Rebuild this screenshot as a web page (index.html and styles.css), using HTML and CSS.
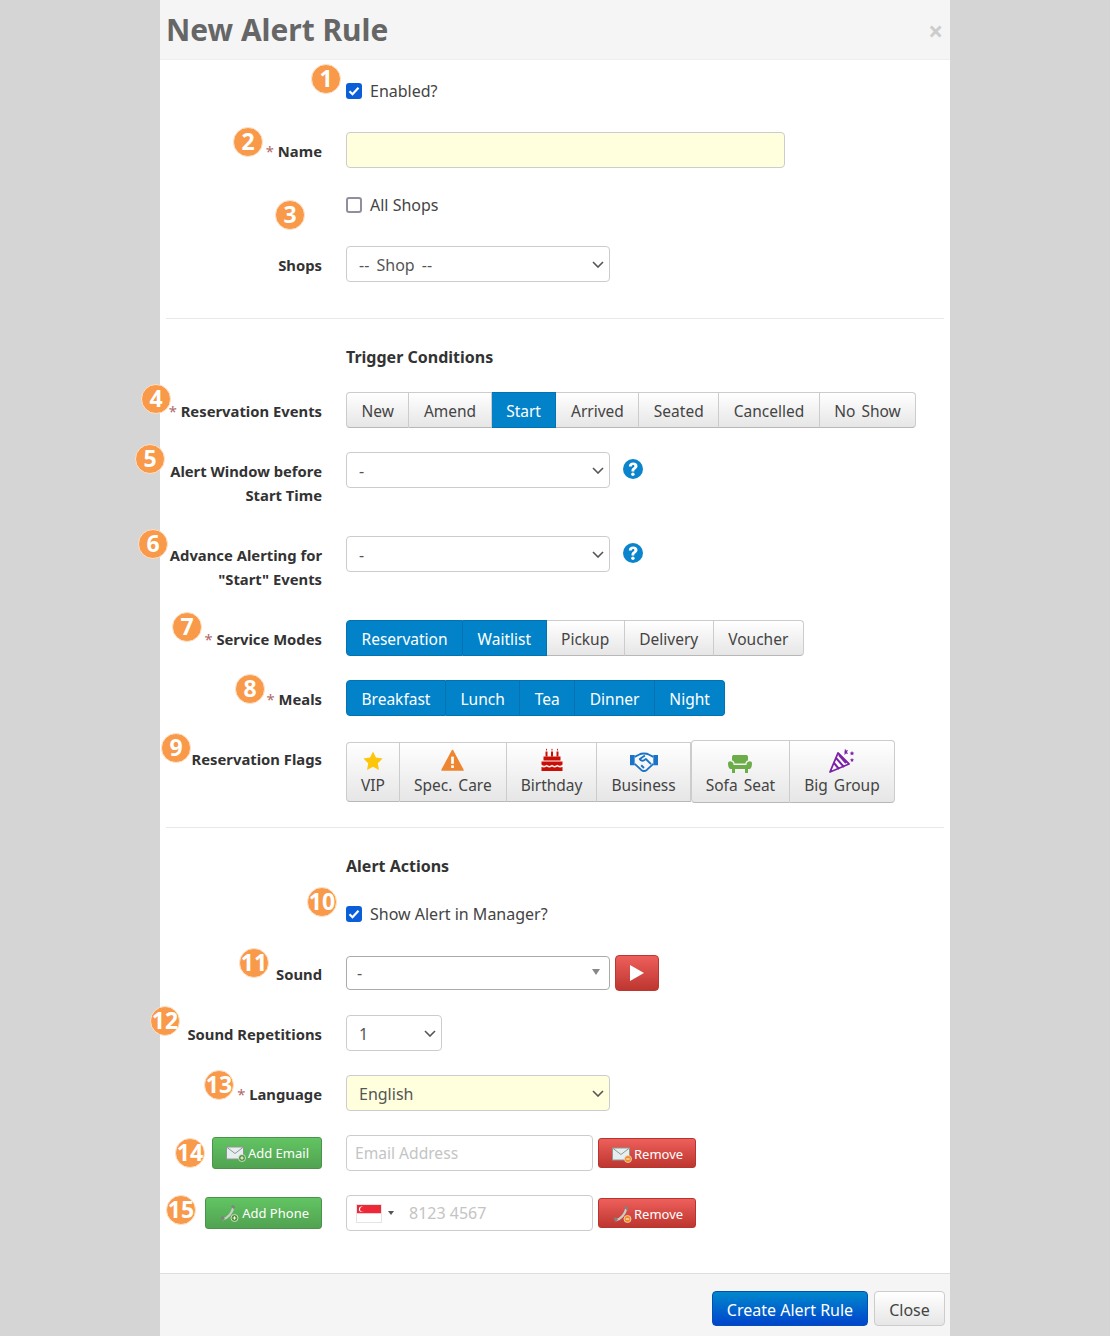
FILE: index.html
```html
<!DOCTYPE html>
<html lang="en">
<head>
    <meta charset="UTF-8">
    <meta name="viewport" content="width=device-width, initial-scale=1.0">
    <title>New Alert Rule</title>
    <link rel="stylesheet" href="styles.css">
</head>
<body>
    <div class="modal">
        <div class="modal-header">
            <h1>New Alert Rule</h1>
            <span class="close-x">&times;</span>
        </div>
        <form class="modal-body">
            <div class="form-row check-row">
                <div></div>
                <label class="check"><input type="checkbox" checked> Enabled?</label>
            </div>
            <div class="form-row">
                <label class="field-label"><span class="req">*</span> Name</label>
                <input type="text" class="text-input name-input yellow">
            </div>
            <div class="form-row check-row short">
                <div></div>
                <label class="check"><input type="checkbox"> All Shops</label>
            </div>
            <div class="form-row section-end">
                <label class="field-label">Shops</label>
                <select class="select-input"><option>-- Shop --</option></select>
            </div>

            <hr>
            <h2 class="section-title">Trigger Conditions</h2>

            <div class="form-row">
                <label class="field-label"><span class="req">*</span> Reservation Events</label>
                <div class="btn-group">
                    <button type="button" class="btn">New</button>
                    <button type="button" class="btn">Amend</button>
                    <button type="button" class="btn active">Start</button>
                    <button type="button" class="btn">Arrived</button>
                    <button type="button" class="btn">Seated</button>
                    <button type="button" class="btn">Cancelled</button>
                    <button type="button" class="btn">No Show</button>
                </div>
            </div>
            <div class="form-row tall">
                <label class="field-label">Alert Window before Start Time</label>
                <div class="with-help">
                    <select class="select-input"><option>-</option></select>
                    <svg class="help" viewBox="0 0 20 20"><circle cx="10" cy="10" r="10" fill="#0a84cc"/><path d="M5.800 7.600C5.900 5 7.600 3.500 10.200 3.500c2.600 0 4.300 1.400 4.300 3.500 0 1.500-.8 2.400-2 3.200-1 .7-1.200 1-1.200 1.800v.4H8.500v-.7c0-1.400.5-2.200 1.600-3 .9-.6 1.300-1 1.300-1.600 0-.7-.5-1.100-1.200-1.100-.8 0-1.300.5-1.400 1.500z" fill="#fff"/><circle cx="9.900" cy="15.200" r="1.700" fill="#fff"/></svg>
                </div>
            </div>
            <div class="form-row tall">
                <label class="field-label">Advance Alerting for "Start" Events</label>
                <div class="with-help">
                    <select class="select-input"><option>-</option></select>
                    <svg class="help" viewBox="0 0 20 20"><circle cx="10" cy="10" r="10" fill="#0a84cc"/><path d="M5.800 7.600C5.900 5 7.600 3.500 10.200 3.500c2.600 0 4.300 1.400 4.300 3.500 0 1.500-.8 2.400-2 3.200-1 .7-1.200 1-1.200 1.800v.4H8.500v-.7c0-1.400.5-2.200 1.600-3 .9-.6 1.300-1 1.300-1.600 0-.7-.5-1.100-1.200-1.100-.8 0-1.300.5-1.400 1.500z" fill="#fff"/><circle cx="9.900" cy="15.200" r="1.700" fill="#fff"/></svg>
                </div>
            </div>
            <div class="form-row">
                <label class="field-label"><span class="req">*</span> Service Modes</label>
                <div class="btn-group">
                    <button type="button" class="btn active">Reservation</button>
                    <button type="button" class="btn active">Waitlist</button>
                    <button type="button" class="btn">Pickup</button>
                    <button type="button" class="btn">Delivery</button>
                    <button type="button" class="btn">Voucher</button>
                </div>
            </div>
            <div class="form-row">
                <label class="field-label"><span class="req">*</span> Meals</label>
                <div class="btn-group">
                    <button type="button" class="btn active">Breakfast</button>
                    <button type="button" class="btn active">Lunch</button>
                    <button type="button" class="btn active">Tea</button>
                    <button type="button" class="btn active">Dinner</button>
                    <button type="button" class="btn active">Night</button>
                </div>
            </div>
            <div class="form-row">
                <label class="field-label">Reservation Flags</label>
                <div class="flag-groups">
                    <div class="btn-group flags">
                        <button type="button" class="btn flag">
                            <svg viewBox="0 0 24 24" width="22" height="22"><path d="M12 1.500l3.200 6.800 7.300 1-5.300 5.200 1.300 7.400L12 18.300l-6.500 3.600 1.300-7.400L1.500 9.300l7.300-1z" fill="#fdc60a"/></svg>
                            VIP
                        </button>
                        <button type="button" class="btn flag">
                            <svg viewBox="0 0 24 24" width="23" height="23"><path d="M12 1.500L23 22H1z" fill="#ee8530" stroke="#ee8530" stroke-width="1.500" stroke-linejoin="round"/><rect x="10.600" y="8" width="2.800" height="7.500" fill="#fff"/><rect x="10.600" y="17" width="2.800" height="2.800" fill="#fff"/></svg>
                            Spec. Care
                        </button>
                        <button type="button" class="btn flag">
                            <svg viewBox="0 0 24 24" width="24" height="24"><path d="M1.500 13.500h21v3c-1.700 1.700-3.500 1.700-5.200.3-1.700 1.500-3.600 1.500-5.300 0-1.700 1.500-3.600 1.500-5.300 0-1.700 1.400-3.500 1.400-5.200-.3z" fill="#c90e05"/><path d="M1.500 19c1.900.8 3.600.6 5.200-.5 1.700 1.200 3.600 1.200 5.300 0 1.700 1.200 3.600 1.200 5.300 0 1.600 1.100 3.300 1.300 5.200.5v4h-21z" fill="#c90e05"/><path d="M3.500 8.500h17v4h-17z" fill="#c90e05"/><path d="M5.500 3.500h2v5h-2zM11 3.500h2v5h-2zM16.500 3.500h2v5h-2z" fill="#c90e05"/><path d="M6.500.5c.8 1 .8 1.800 0 2.300-.8-.5-.8-1.300 0-2.300zM12 .5c.8 1 .8 1.800 0 2.300-.8-.5-.8-1.300 0-2.300zM17.500.5c.8 1 .8 1.800 0 2.300-.8-.5-.8-1.300 0-2.300z" fill="#c90e05"/></svg>
                            Birthday
                        </button>
                        <button type="button" class="btn flag">
                            <svg viewBox="0 0 30 22" width="28" height="21"><path d="M0 4h5v11H0zM25 4h5v11h-5z" fill="#1a73c8"/><path d="M5 6l5-2.500c2-1.500 8-1.500 10 0L25 6M5 13.500l7 6.500c2 1.500 4 1.500 6 0l7-6.500" fill="none" stroke="#1a73c8" stroke-width="2" stroke-linejoin="round"/><path d="M16 4.500l-5.500 3.800c1.200 2.200 3.200 2.300 5 1l1.500-1 5.500 5.500M12 15l3 3" fill="none" stroke="#1a73c8" stroke-width="2" stroke-linejoin="round"/></svg>
                            Business
                        </button>
                    </div>
                    <div class="btn-group flags raised">
                        <button type="button" class="btn flag">
                            <svg viewBox="0 0 26 20" width="26" height="20"><path d="M5 3C5 1.500 6 1 7 1h12c1 0 2 .5 2 2v3.500c-1.500.3-2.500 1.300-2.500 3h-11C7.500 7.800 6.500 6.800 5 6.500z" fill="#6cad4a"/><path d="M1 9.500C1 8 2 7.300 3 7.300s3.500.7 3.500 3v.7h13v-.7c0-2.300 2.500-3 3.500-3s2 .7 2 2.200c0 2.500-.5 4.500-2 5.500H3c-1.500-1-2-3-2-5.500z" fill="#6cad4a"/><path d="M5 15h3v4H5zM18 15h3v4h-3z" fill="#6cad4a"/></svg>
                            Sofa Seat
                        </button>
                        <button type="button" class="btn flag popper">
                            <svg viewBox="0 0 26 26" width="26" height="26"><path d="M1 25L9 6l11 11z" fill="#fff" stroke="#7b22a8" stroke-width="1.800" stroke-linejoin="round"/><path d="M7 11l8 9M5 16l5 6M10 8l7 8" stroke="#7b22a8" stroke-width="2"/><path d="M16 1.500l1 2 2-.5-1 2 1 2-2-.5-1.500 1.500V5zM23 4l.7 1.500 1.600.2-1.200 1 .3 1.600-1.400-.8-1.400.8.3-1.600-1.200-1 1.600-.2zM23 11l.6 1.200 1.400.2-1 1 .2 1.400-1.200-.6-1.200.6.2-1.400-1-1 1.400-.2z" fill="#7b22a8"/></svg>
                            Big Group
                        </button>
                    </div>
                </div>
            </div>

            <hr>
            <h2 class="section-title actions">Alert Actions</h2>

            <div class="form-row check-row">
                <div></div>
                <label class="check"><input type="checkbox" checked> Show Alert in Manager?</label>
            </div>
            <div class="form-row">
                <label class="field-label">Sound</label>
                <div class="sound-wrap">
                    <div class="sound-select"><span>-</span><i class="caret"></i></div>
                    <button type="button" class="btn-play">
                        <svg viewBox="0 0 14 16" width="14" height="16"><path d="M0 0l14 8-14 8z" fill="#fff"/></svg>
                    </button>
                </div>
            </div>
            <div class="form-row">
                <label class="field-label">Sound Repetitions</label>
                <select class="select-input small"><option>1</option></select>
            </div>
            <div class="form-row">
                <label class="field-label"><span class="req">*</span> Language</label>
                <select class="select-input yellow"><option>English</option></select>
            </div>
            <div class="form-row">
                <div class="label-btn">
                    <button type="button" class="btn-small green">
                        <svg viewBox="0 0 20 18" width="20" height="18"><rect x=".5" y="3" width="17" height="12" fill="#e8eef0" stroke="#8a9a92"/><path d="M.5 3L9 9.500 17.500 3" fill="none" stroke="#8a9a92"/><circle cx="16" cy="14" r="3.500" fill="#4f8f34" stroke="#e8f0e0" stroke-width=".8"/><path d="M14.300 14h3.400M16 12.300v3.400" stroke="#fff"/></svg>
                        Add Email
                    </button>
                </div>
                <div class="contact-row">
                    <input type="text" class="text-input contact" placeholder="Email Address">
                    <button type="button" class="btn-small red">
                        <svg viewBox="0 0 20 18" width="20" height="18"><rect x=".5" y="3" width="17" height="12" fill="#e8eef0" stroke="#8a9a92"/><path d="M.5 3L9 9.500 17.500 3" fill="none" stroke="#8a9a92"/><circle cx="16" cy="14" r="3.500" fill="#f08a24" stroke="#f5dcc0" stroke-width=".8"/><path d="M14.300 14h3.400" stroke="#fff"/></svg>
                        Remove
                    </button>
                </div>
            </div>
            <div class="form-row">
                <div class="label-btn">
                    <button type="button" class="btn-small green">
                        <svg viewBox="0 0 21 18" width="21" height="18"><path d="M3.500 15.500C9 14 13 9 14.500 3" fill="none" stroke="#c8cec8" stroke-width="2.200"/><path d="M1.500 13.500l2.500-1.500 2 3-2.500 1.500zM12 2.500l2-1.500 2.500 2.500-2 1.500z" fill="#7c847c"/><circle cx="15.500" cy="14" r="3.500" fill="#4f8f34" stroke="#e8f0e0" stroke-width=".8"/><path d="M13.800 14h3.400M15.500 12.300v3.400" stroke="#fff"/></svg>
                        Add Phone
                    </button>
                </div>
                <div class="contact-row">
                    <div class="phone-input">
                        <span class="flag-sg">
                            <svg viewBox="0 0 24 17" width="24" height="17"><rect width="24" height="8.500" fill="#ed2939"/><rect y="8.500" width="24" height="8.500" fill="#fff"/><circle cx="4.500" cy="4.200" r="2.600" fill="#fff"/><circle cx="5.600" cy="4.200" r="2.500" fill="#ed2939"/></svg>
                        </span>
                        <i class="flag-caret"></i>
                        <input type="text" class="phone-number" placeholder="8123 4567">
                    </div>
                    <button type="button" class="btn-small red">
                        <svg viewBox="0 0 20 18" width="20" height="18"><path d="M3.500 15.500C9 14 13 9 14.500 3" fill="none" stroke="#c8cec8" stroke-width="2.200"/><path d="M1.500 13.500l2.500-1.500 2 3-2.500 1.500zM12 2.500l2-1.500 2.500 2.500-2 1.500z" fill="#7c847c"/><circle cx="15.500" cy="14" r="3.500" fill="#f08a24" stroke="#f5dcc0" stroke-width=".8"/><path d="M13.800 14h3.400" stroke="#fff"/></svg>
                        Remove
                    </button>
                </div>
            </div>
        </form>
        <div class="modal-footer">
            <button type="button" class="btn-create">Create Alert Rule</button>
            <button type="button" class="btn-close">Close</button>
        </div>

        <!-- numbered callouts drawn over the form -->
        <span class="badge b1">1</span>
        <span class="badge b2">2</span>
        <span class="badge b3">3</span>
        <span class="badge b4">4</span>
        <span class="badge b5">5</span>
        <span class="badge b6">6</span>
        <span class="badge b7">7</span>
        <span class="badge b8">8</span>
        <span class="badge b9">9</span>
        <span class="badge b10">10</span>
        <span class="badge b11">11</span>
        <span class="badge b12">12</span>
        <span class="badge b13">13</span>
        <span class="badge b14">14</span>
        <span class="badge b15">15</span>
    </div>
</body>
</html>
```

FILE: styles.css
```css
* {
    box-sizing: border-box;
}
html, body {
    margin: 0;
    height: 100%;
}
body {
    background-color: #d5d5d5;
    font-family: "Noto Sans", "Open Sans", sans-serif;
    font-size: 16px;
    color: #444;
    overflow: hidden;
}
button, input, select {
    font-family: inherit;
}
.modal {
    position: relative;
    width: 790px;
    height: 1336px;
    margin-left: 160px;
    background-color: #fff;
}
.modal-header {
    display: flex;
    justify-content: space-between;
    align-items: center;
    height: 60px;
    padding: 0 7px 0 6px;
    background-color: #f5f5f5;
    border-bottom: 1px solid #eee;
}
.modal-header h1 {
    margin: 0;
    font-size: 29.900px;
    font-weight: 700;
    color: #666;
}
.close-x {
    margin-top: 2px;
    font-size: 26px;
    font-weight: 700;
    color: #ccc;
}
.modal-body {
    padding: 12px 6px 18px;
}
.form-row {
    display: grid;
    grid-template-columns: 156px 1fr;
    column-gap: 24px;
    min-height: 36px;
    margin-bottom: 24px;
}
.form-row.section-end {
    margin-bottom: 36px;
}
.form-row.tall {
    height: 60px;
}
.form-row.check-row {
    padding-top: 7px;
}
.form-row.short {
    min-height: 30px;
    height: 30px;
    padding-top: 1px;
}
.field-label {
    padding-top: 7px;
    font-size: 14.800px;
    line-height: 24px;
    font-weight: 700;
    color: #333;
    text-align: right;
}
.req {
    color: #b0686b;
    font-weight: 400;
}
.check {
    display: flex;
    align-items: center;
    gap: 8px;
    height: 24px;
    font-size: 16px;
}
.check input {
    appearance: none;
    width: 16px;
    height: 16px;
    margin: 0;
    background-color: #fff;
    border: 2px solid #8f8f9d;
    border-radius: 3px;
}
.check input:checked {
    border: 0;
    background: #0a5fd8 url("data:image/svg+xml,%3Csvg xmlns='http://www.w3.org/2000/svg' viewBox='0 0 16 16'%3E%3Cpath d='M3.500 8.200l3 3 6-6.500' fill='none' stroke='%23fff' stroke-width='2.200'/%3E%3C/svg%3E") center / 16px no-repeat;
}
.text-input, .select-input {
    height: 36px;
    padding: 0 12px;
    font-size: 16px;
    color: #555;
    background-color: #fff;
    border: 1px solid #ccc;
    border-radius: 4px;
}
.text-input::placeholder, .phone-number::placeholder {
    color: #c4c4c4;
}
.name-input {
    width: 439px;
}
.select-input {
    width: 264px;
    padding-top: 2px;
    word-spacing: 3px;
    appearance: none;
    background-image: url("data:image/svg+xml,%3Csvg xmlns='http://www.w3.org/2000/svg' viewBox='0 0 12 7'%3E%3Cpath d='M1 1l5 5 5-5' fill='none' stroke='%23555' stroke-width='1.600'/%3E%3C/svg%3E");
    background-repeat: no-repeat;
    background-position: right 5px center;
    background-size: 12px 7px;
}
.select-input.small {
    width: 96px;
}
.select-input.yellow, .yellow {
    background-color: #ffffdd;
}
hr {
    height: 1px;
    margin: 0;
    border: 0;
    background-color: #e8e8e8;
}
.section-title {
    margin: 26px 0 23px 180px;
    font-size: 16px;
    line-height: 24px;
    font-weight: 700;
    color: #333;
}
.section-title.actions {
    margin-bottom: 17px;
}
.btn-group {
    display: flex;
    align-items: flex-start;
}
.btn {
    height: 36px;
    padding: 2px 14.500px 0;
    font-size: 15.500px;
    word-spacing: 2px;
    color: #444;
    background: linear-gradient(#fff, #e6e6e6);
    border: 1px solid #ccc;
    border-left-width: 0;
    border-bottom-color: #b8b8b8;
    white-space: nowrap;
}
.btn:first-child {
    border-left-width: 1px;
    border-radius: 4px 0 0 4px;
}
.btn:last-child {
    border-radius: 0 4px 4px 0;
}
.btn.active {
    color: #fff;
    background: #0283c9;
    border-color: #0272b0;
}
.flag-groups {
    display: flex;
    align-items: flex-start;
}
.flags {
    margin-top: 2px;
}
.flags.raised {
    margin-top: 0;
}
.flags .btn {
    display: flex;
    flex-direction: column;
    align-items: center;
    justify-content: flex-end;
    height: 60px;
    padding: 2px 14px 5px;
}
.flags svg {
    margin-bottom: 2px;
}
.flags.raised .btn {
    height: 63px;
    padding-bottom: 6px;
}
.flags.raised svg {
    margin-bottom: 0;
}
.flags.raised .popper svg {
    margin-bottom: 1px;
}
.flags:not(.raised) .btn:last-child {
    border-radius: 0;
}
.with-help {
    display: flex;
    align-items: flex-start;
    gap: 13px;
}
.help {
    width: 20px;
    height: 20px;
    margin-top: 7px;
}
.sound-wrap {
    display: flex;
    align-items: center;
    gap: 5px;
}
.sound-select {
    display: flex;
    justify-content: space-between;
    align-items: center;
    width: 264px;
    height: 34px;
    padding: 0 9px 0 10px;
    color: #555;
    border: 1px solid #aaa;
    border-radius: 4px;
}
.caret {
    width: 0;
    height: 0;
    margin-top: -2px;
    border-left: 4px solid transparent;
    border-right: 4px solid transparent;
    border-top: 6px solid #888;
}
.btn-play {
    display: flex;
    justify-content: center;
    align-items: center;
    width: 44px;
    height: 36px;
    padding: 0;
    background: linear-gradient(#ee5f5b, #bd362f);
    border: 1px solid #bd362f;
    border-radius: 4px;
}
.label-btn {
    display: flex;
    justify-content: flex-end;
    align-items: center;
}
.btn-small {
    display: inline-flex;
    align-items: center;
    gap: 2px;
    padding: 0 12px 0 13px;
    font-size: 13px;
    color: #fff;
    border-radius: 3px;
    white-space: nowrap;
}
.btn-small.green {
    height: 32px;
    background: linear-gradient(#62c462, #51a351);
    border: 1px solid #4a934a;
}
.btn-small.red {
    height: 30px;
    padding-top: 1px;
    background: linear-gradient(#ee5f5b, #bd362f);
    border: 1px solid #b7352e;
}
.contact-row {
    display: flex;
    align-items: center;
    gap: 5px;
}
.text-input.contact, .phone-input {
    width: 247px;
    height: 36px;
}
.text-input.contact {
    padding: 0 8px;
    font-size: 15.600px;
}
.phone-input {
    display: flex;
    align-items: center;
    padding-left: 9px;
    border: 1px solid #ccc;
    border-radius: 4px;
}
.flag-sg {
    display: flex;
    border: 1px solid #e4e4e4;
}
.flag-caret {
    width: 0;
    height: 0;
    margin-left: 6px;
    border-left: 3px solid transparent;
    border-right: 3px solid transparent;
    border-top: 4px solid #555;
}
.phone-number {
    width: 170px;
    margin-left: 15px;
    padding: 0;
    font-size: 16px;
    border: 0;
    outline: 0;
}
.modal-footer {
    display: flex;
    justify-content: flex-end;
    align-items: flex-start;
    gap: 6px;
    height: 63px;
    padding: 17px 5px 0;
    background-color: #f5f5f5;
    border-top: 1px solid #ddd;
}
.btn-create, .btn-close {
    height: 35px;
    padding: 2px 0 0;
    font-size: 16px;
    border-radius: 4px;
}
.btn-create {
    width: 156px;
    color: #fff;
    background: linear-gradient(#0088cc, #0044cc);
    border: 1px solid #0050b8;
}
.btn-close {
    width: 71px;
    color: #444;
    background: linear-gradient(#fff, #e6e6e6);
    border: 1px solid #ccc;
}
.badge {
    position: absolute;
    width: 30px;
    height: 30px;
    font-size: 23px;
    line-height: 27px;
    font-weight: 700;
    text-align: center;
    color: #fff;
    background-color: #f89a4a;
    border: 1px solid #fde3cc;
    border-radius: 50%;
}
.b1 { left: 151px; top: 64px; }
.b2 { left: 73px; top: 127px; }
.b3 { left: 115px; top: 200px; }
.b4 { left: -19px; top: 384px; }
.b5 { left: -25px; top: 444px; }
.b6 { left: -22px; top: 529px; }
.b7 { left: 12px; top: 612px; }
.b8 { left: 75px; top: 674px; }
.b9 { left: 1px; top: 733px; }
.b10 { left: 147px; top: 887px; }
.b11 { left: 79px; top: 948px; }
.b12 { left: -10px; top: 1006px; }
.b13 { left: 44px; top: 1070px; }
.b14 { left: 15px; top: 1138px; }
.b15 { left: 6px; top: 1195px; }
```
